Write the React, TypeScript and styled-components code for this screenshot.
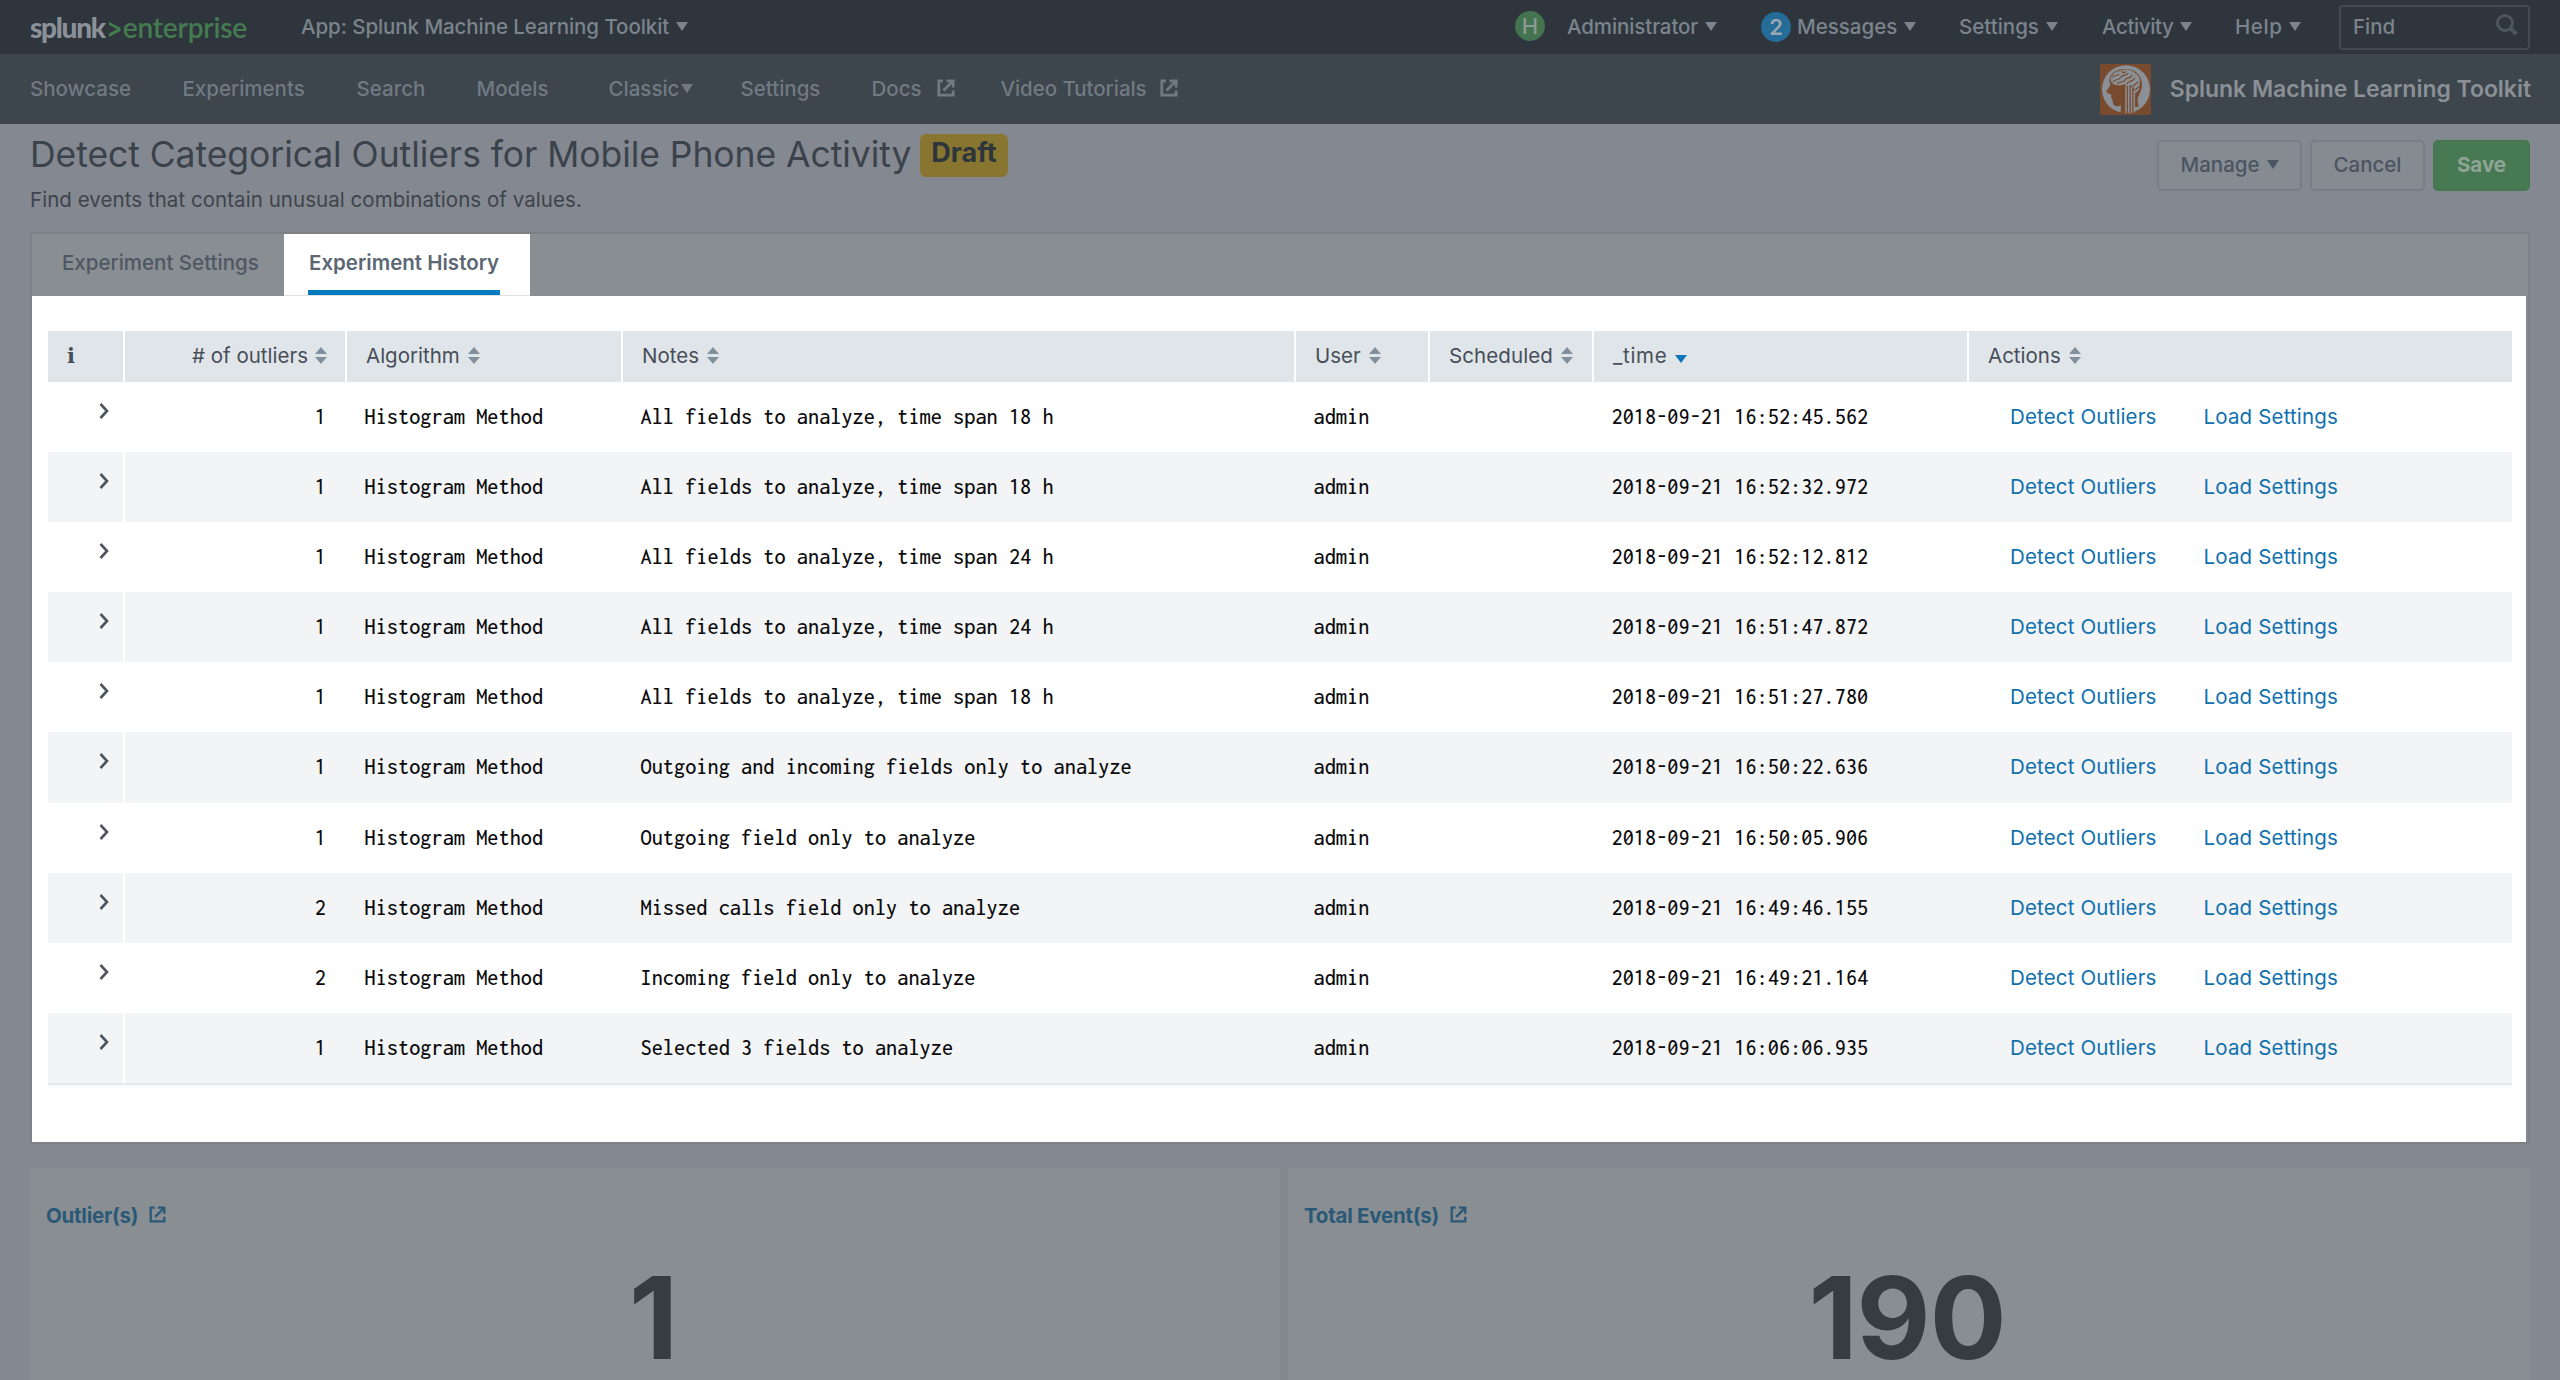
import React from "react";
import styled, { createGlobalStyle } from "styled-components";

const GlobalStyle = createGlobalStyle`
  *, *::before, *::after { box-sizing: border-box; }
  body {
    margin: 0;
    background: #848890;
    font-family: Inter, "Open Sans", "Liberation Sans", sans-serif;
    font-size: 20.5px;
    overflow: hidden;
  }
`;

const Page = styled.div`
  display: flex;
  flex-direction: column;
  width: 2560px;
  height: 1380px;
  overflow: hidden;
  white-space: nowrap;
`;

/* ---------- global bar ---------- */

const GlobalBar = styled.header`
  display: flex;
  align-items: center;
  justify-content: space-between;
  height: 54px;
  flex: none;
  padding: 0 30px;
  background: #2e353c;
  color: #7b848d;
  font-weight: 500;
`;

const BarGroup = styled.div`
  display: flex;
  align-items: center;
  height: 100%;
`;

const Logo = styled.div`
  display: flex;
  align-items: baseline;
  width: 271px;
  height: 46px;
  line-height: 46px;
  font-family: Lato, "Open Sans", sans-serif;
  font-size: 28px;
`;

const LogoName = styled.span`
  color: #8b9198;
  font-weight: 900;
  letter-spacing: -1.3px;
`;

const LogoMark = styled.svg`
  width: 13px;
  height: 18px;
  margin: 0 2px 0 3px;
`;

const LogoEdition = styled.span`
  color: #457b50;
  font-weight: 600;
  letter-spacing: -0.15px;
`;

const MenuItem = styled.div<{ $w?: number; $track?: number }>`
  display: flex;
  align-items: center;
  width: ${(p) => (p.$w ? `${p.$w}px` : "auto")};
  padding-bottom: 2px;
  letter-spacing: ${(p) => p.$track ?? 0}px;
`;

const Caret = styled.span<{ $gap?: number }>`
  width: 0;
  height: 0;
  margin-left: ${(p) => p.$gap ?? 7}px;
  border: 6.5px solid transparent;
  border-top: 9px solid currentColor;
  border-bottom: 0;
`;

const HealthBadge = styled.span`
  display: flex;
  align-items: center;
  justify-content: center;
  width: 30px;
  height: 30px;
  margin: 0 22px 2px 0;
  border-radius: 50%;
  background: #44734f;
  color: #8b9a94;
  font-size: 22px;
`;

const CountBadge = styled.span`
  display: flex;
  align-items: center;
  justify-content: center;
  width: 30px;
  height: 30px;
  margin: 0 6px 1px 0;
  border-radius: 50%;
  background: #256c98;
  color: #98a7b1;
  font-size: 22px;
  font-weight: 600;
`;

const FindBox = styled.div`
  display: flex;
  align-items: center;
  justify-content: space-between;
  width: 191px;
  height: 45px;
  padding: 0 10px 2px 12px;
  border: 2px solid #424b55;
  border-radius: 4px;
`;

const SearchGlyph = styled.svg`
  width: 22px;
  height: 22px;
  margin-bottom: 2px;
  stroke: #4c5660;
  fill: none;
`;

/* ---------- app bar ---------- */

const AppBar = styled.nav`
  display: flex;
  align-items: center;
  justify-content: space-between;
  height: 70px;
  flex: none;
  padding: 0 29px 0 30px;
  background: #3d454d;
  color: #717a83;
  font-weight: 500;
`;

const AppBrand = styled.div`
  display: flex;
  align-items: center;
  gap: 19px;
  color: #8a9096;
  font-size: 23px;
  font-weight: 600;
  letter-spacing: -0.03px;
`;

const AppIcon = styled.svg`
  width: 51px;
  height: 51px;
`;

const ExternalGlyph = styled.svg<{ $size: number; $gap: number }>`
  width: ${(p) => p.$size}px;
  height: ${(p) => p.$size}px;
  margin-left: ${(p) => p.$gap}px;
  margin-bottom: 1px;
  stroke: currentColor;
  fill: none;
`;

/* ---------- page heading ---------- */

const Heading = styled.section`
  display: flex;
  justify-content: space-between;
  height: 108px;
  flex: none;
  padding: 0 30px;
  color: #3a424b;
`;

const TitleRow = styled.div`
  display: flex;
  align-items: flex-start;
  height: 60px;
`;

const Title = styled.h1`
  margin: 0;
  font-size: 35.5px;
  font-weight: 400;
  line-height: 62px;
  letter-spacing: -0.06px;
`;

const DraftBadge = styled.span`
  height: 43px;
  margin: 10px 0 0 9px;
  padding: 0 11px;
  border-radius: 6px;
  background: #88752f;
  color: #2d353d;
  font-size: 27px;
  font-weight: 700;
  line-height: 38px;
`;

const Subtitle = styled.p`
  margin: 0;
  line-height: 32px;
  color: #3e444c;
  letter-spacing: 0.05px;
`;

const ButtonRow = styled.div`
  display: flex;
  gap: 8px;
  padding-top: 16px;
`;

const Button = styled.button<{ $w: number; $primary?: boolean }>`
  display: flex;
  align-items: center;
  justify-content: center;
  width: ${(p) => p.$w}px;
  height: 51px;
  padding: 0 0 2px;
  border: 2px solid ${(p) => (p.$primary ? "#467850" : "#767e86")};
  border-radius: 5px;
  background: ${(p) => (p.$primary ? "#477a52" : "#868b92")};
  color: ${(p) => (p.$primary ? "#90a497" : "#4b5562")};
  font-family: inherit;
  font-size: 20.5px;
  font-weight: ${(p) => (p.$primary ? 700 : 500)};
`;

/* ---------- tabs and panel ---------- */

const Workspace = styled.section`
  display: flex;
  flex-direction: column;
  flex: none;
  height: 912px;
  margin: 0 30px;
  border: 2px solid #7c8286;
  border-top-color: #7a8083;
`;

const TabBar = styled.div`
  display: flex;
  height: 62px;
  flex: none;
  background: #888e91;
`;

const Tab = styled.div<{ $active?: boolean; $w: number }>`
  width: ${(p) => p.$w}px;
  padding-left: ${(p) => (p.$active ? 24 : 29)}px;
  background: ${(p) => (p.$active ? "#fff" : "transparent")};
  color: ${(p) => (p.$active ? "#5c6773" : "#4e5864")};
  font-weight: ${(p) => (p.$active ? 600 : 500)};
  border-bottom: 1px solid ${(p) => (p.$active ? "#dfe1e2" : "transparent")};
`;

const TabLabel = styled.span<{ $active?: boolean }>`
  display: inline-block;
  height: 61px;
  padding: 0 1px;
  line-height: 58px;
  border-bottom: 5px solid ${(p) => (p.$active ? "#007abf" : "transparent")};
`;

const Panel = styled.div`
  flex: 1;
  margin-right: 2px;
  padding: 35px 14px 0 16px;
  background: #fff;
`;

/* ---------- table ---------- */

const Table = styled.div`
  width: 2464px;
  border-bottom: 2px solid #e6e9eb;
  box-shadow: 0 2px 1px #f7f8f9;
`;

const TableRow = styled.div<{ $striped?: boolean }>`
  display: grid;
  grid-template-columns: 77px 222px 276px 673px 134px 164px 375px 543px;
  height: 70.1px;
  background: ${(p) => (p.$striped ? "#f2f4f5" : "#fff")};
`;

const HeaderRow = styled(TableRow)`
  height: 51px;
  background: #e0e5e9;
  color: #474e59;
`;

const HeaderCell = styled.div<{ $right?: boolean; $track?: number }>`
  display: flex;
  align-items: center;
  justify-content: ${(p) => (p.$right ? "flex-end" : "flex-start")};
  gap: ${(p) => (p.$right ? 8 : 9)}px;
  padding: 0 18px 2px 19px;
  border-right: 2px solid #fff;
  letter-spacing: ${(p) => p.$track ?? 0}px;
  &:last-child { border-right: 0; }
`;

const InfoMark = styled.span`
  font-family: "DejaVu Serif", "Liberation Serif", serif;
  font-size: 21px;
  font-weight: 700;
  line-height: 48px;
`;

const SortGlyph = styled.svg`
  width: 12px;
  height: 17px;
  margin-left: -1px;
  fill: #81909c;
`;

const SortedGlyph = styled.svg`
  width: 12px;
  height: 8px;
  margin: 7px 0 0 -1px;
  fill: #0d75ba;
`;

const Cell = styled.div<{ $right?: boolean }>`
  padding: 0 ${(p) => (p.$right ? 21 : 17.5)}px;
  color: #0b0b0d;
  font-family: Inconsolata, "Noto Sans Mono CJK SC", "DejaVu Sans Mono", monospace;
  font-size: 22.33px;
  font-weight: 500;
  line-height: 70px;
  text-align: ${(p) => (p.$right ? "right" : "left")};
`;

const ExpandCell = styled.div`
  display: flex;
  justify-content: flex-end;
  padding: 21px 14px 0 0;
  border-right: 2px solid #fff;
`;

const Chevron = styled.svg`
  width: 10px;
  height: 16px;
  stroke: #4c545e;
  fill: none;
`;

const ActionCell = styled.div`
  display: flex;
  gap: 47px;
  padding-left: 41px;
  line-height: 69px;
`;

const ActionLink = styled.a`
  color: #1070ad;
  letter-spacing: 0.15px;
`;

/* ---------- result cards ---------- */

const Cards = styled.section`
  display: grid;
  grid-template-columns: 1250px 1242px;
  gap: 8px;
  height: 212px;
  margin: 24px 30px 0;
  background: #83888c;
`;

const Card = styled.div`
  display: flex;
  flex-direction: column;
  padding-top: 28px;
  background: #888e91;
`;

const CardTitle = styled.a`
  display: flex;
  align-items: center;
  height: 38px;
  padding-left: 16px;
  color: #2a5978;
  font-weight: 700;
  letter-spacing: -0.25px;
`;

const CardValue = styled.div`
  align-self: center;
  margin-top: 24px;
  padding-right: 4px;
  color: #373c41;
  font-size: 114px;
  font-weight: 700;
  line-height: 120px;
  letter-spacing: -1px;
`;

const External = ({ size, gap, weight }: { size: number; gap: number; weight: number }) => (
  <ExternalGlyph viewBox="0 0 18 18" $size={size} $gap={gap} strokeWidth={weight}>
    <path d="M6 1.8H1.8V16.2H16.2V11.5" />
    <path d="M6.5 11.5L15 3M9.5 1.8H16.2V8.5" />
  </ExternalGlyph>
);

const Sort = () => (
  <SortGlyph viewBox="0 0 12 17">
    <path d="M6 0L12 7H0ZM6 17L0 10H12Z" />
  </SortGlyph>
);

const headers = [
  { label: "# of outliers", right: true },
  { label: "Algorithm" },
  { label: "Notes" },
  { label: "User" },
  { label: "Scheduled", track: 0.1 },
  { label: "_time", track: 0.7, sorted: true },
  { label: "Actions" },
];

const rows: [number, string, string][] = [
  [1, "All fields to analyze, time span 18 h", "2018-09-21 16:52:45.562"],
  [1, "All fields to analyze, time span 18 h", "2018-09-21 16:52:32.972"],
  [1, "All fields to analyze, time span 24 h", "2018-09-21 16:52:12.812"],
  [1, "All fields to analyze, time span 24 h", "2018-09-21 16:51:47.872"],
  [1, "All fields to analyze, time span 18 h", "2018-09-21 16:51:27.780"],
  [1, "Outgoing and incoming fields only to analyze", "2018-09-21 16:50:22.636"],
  [1, "Outgoing field only to analyze", "2018-09-21 16:50:05.906"],
  [2, "Missed calls field only to analyze", "2018-09-21 16:49:46.155"],
  [2, "Incoming field only to analyze", "2018-09-21 16:49:21.164"],
  [1, "Selected 3 fields to analyze", "2018-09-21 16:06:06.935"],
];

export default function App() {
  return (
    <Page>
      <GlobalStyle />
      <GlobalBar>
        <BarGroup>
          <Logo>
            <LogoName>splunk</LogoName>
            <LogoMark viewBox="0 0 13 18">
              <path d="M1 1.5V5L9 9.3L1 13.5V17L12.5 11V7.8L3 3Z" fill="#457b50" />
            </LogoMark>
            <LogoEdition>enterprise</LogoEdition>
          </Logo>
          <MenuItem $track={-0.07}>
            App: Splunk Machine Learning Toolkit
            <Caret />
          </MenuItem>
        </BarGroup>
        <BarGroup>
          <HealthBadge>H</HealthBadge>
          <MenuItem $w={194} $track={-0.1}>
            Administrator
            <Caret />
          </MenuItem>
          <CountBadge>2</CountBadge>
          <MenuItem $w={162}>
            Messages
            <Caret />
          </MenuItem>
          <MenuItem $w={143}>
            Settings
            <Caret />
          </MenuItem>
          <MenuItem $w={133} $track={-0.4}>
            Activity
            <Caret />
          </MenuItem>
          <MenuItem $w={104} $track={0.6}>
            Help
            <Caret $gap={6} />
          </MenuItem>
          <FindBox>
            Find
            <SearchGlyph viewBox="0 0 22 22" strokeWidth={3}>
              <circle cx="9" cy="9" r="7.5" />
              <path d="M14.5 14.5L20.5 20" strokeWidth={4} />
            </SearchGlyph>
          </FindBox>
        </BarGroup>
      </GlobalBar>

      <AppBar>
        <BarGroup>
          <MenuItem $w={152.5}>Showcase</MenuItem>
          <MenuItem $w={174}>Experiments</MenuItem>
          <MenuItem $w={120}>Search</MenuItem>
          <MenuItem $w={132}>Models</MenuItem>
          <MenuItem $w={132}>
            Classic
            <Caret $gap={2} />
          </MenuItem>
          <MenuItem $w={131}>Settings</MenuItem>
          <MenuItem $w={129}>
            Docs
            <External size={18} gap={15} weight={2.8} />
          </MenuItem>
          <MenuItem $track={-0.05}>
            Video Tutorials
            <External size={18} gap={13} weight={2.8} />
          </MenuItem>
        </BarGroup>
        <AppBrand>
          <AppIcon viewBox="0 0 51 51">
            <rect width="51" height="51" fill="#784a2e" />
            <circle cx="26" cy="25.2" r="24" fill="#8a9095" />
            <path
              d="M11 11C15 6 21 5 26 5C36 5 42 12 42 21C42 27 38.500 30 37.500 36L38.500 43L35 43V49.500H20.500L21 41.500C17 43 13.500 42.500 13 39L12 35L11 33L11.500 31L6 28L10.500 21C9 17 9 14 11 11Z"
              fill="#784a2e"
            />
            <path
              d="M11 17C9 12 15 7 20 7C25 4 33 6 35 9C39 11 41 16 39.500 20C41 24 38 28 35 29L34 24L31 21L28 22L25 20C19 23 12 21 11 17Z"
              fill="#8a9095"
            />
            <path
              d="M12 13C15 10 17 13 19 10M13 18C16 14 19 17 21 13C23 10 26 13 28 9M17 20C20 16 23 20 25 16C27 12 30 16 32 11M27 20C28 16 32 19 35 14M33 22L38 18M35 26L40 22M22 7C23 10 25 9 26 7"
              fill="none"
              stroke="#784a2e"
              strokeWidth="1.2"
            />
            <path d="M26 21V49M28.700 21V49.300M31.500 23V49M34.300 27V48.500" stroke="#8a9095" strokeWidth="1.5" />
          </AppIcon>
          Splunk Machine Learning Toolkit
        </AppBrand>
      </AppBar>

      <Heading>
        <div>
          <TitleRow>
            <Title>Detect Categorical Outliers for Mobile Phone Activity</Title>
            <DraftBadge>Draft</DraftBadge>
          </TitleRow>
          <Subtitle>Find events that contain unusual combinations of values.</Subtitle>
        </div>
        <ButtonRow>
          <Button $w={145}>
            Manage
            <Caret />
          </Button>
          <Button $w={115}>Cancel</Button>
          <Button $w={97} $primary>
            Save
          </Button>
        </ButtonRow>
      </Heading>

      <Workspace>
        <TabBar>
          <Tab $w={252}>
            <TabLabel>Experiment Settings</TabLabel>
          </Tab>
          <Tab $w={246} $active>
            <TabLabel $active>Experiment History</TabLabel>
          </Tab>
        </TabBar>
        <Panel>
          <Table>
            <HeaderRow>
              <HeaderCell>
                <InfoMark>i</InfoMark>
              </HeaderCell>
              {headers.map((h) => (
                <HeaderCell key={h.label} $right={h.right} $track={h.track}>
                  {h.label}
                  {h.sorted ? (
                    <SortedGlyph viewBox="0 0 12 8">
                      <path d="M0 0H12L6 8Z" />
                    </SortedGlyph>
                  ) : (
                    <Sort />
                  )}
                </HeaderCell>
              ))}
            </HeaderRow>
            {rows.map(([count, notes, time], i) => (
              <TableRow key={time} $striped={i % 2 === 1}>
                <ExpandCell>
                  <Chevron viewBox="0 0 10 16" strokeWidth={2.6}>
                    <path d="M1.500 1L8 8L1.500 15" />
                  </Chevron>
                </ExpandCell>
                <Cell $right>{count}</Cell>
                <Cell>Histogram Method</Cell>
                <Cell>{notes}</Cell>
                <Cell>admin</Cell>
                <Cell />
                <Cell>{time}</Cell>
                <ActionCell>
                  <ActionLink>Detect Outliers</ActionLink>
                  <ActionLink>Load Settings</ActionLink>
                </ActionCell>
              </TableRow>
            ))}
          </Table>
        </Panel>
      </Workspace>

      <Cards>
        <Card>
          <CardTitle>
            Outlier(s)
            <External size={17} gap={11} weight={2.4} />
          </CardTitle>
          <CardValue>1</CardValue>
        </Card>
        <Card>
          <CardTitle>
            Total Event(s)
            <External size={17} gap={11} weight={2.4} />
          </CardTitle>
          <CardValue>190</CardValue>
        </Card>
      </Cards>
    </Page>
  );
}
